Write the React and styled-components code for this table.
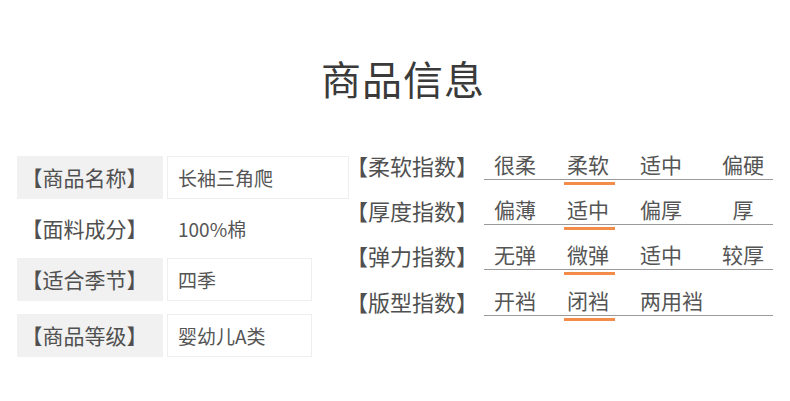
import React from 'react';
import styled, { createGlobalStyle } from 'styled-components';

const GlobalStyle = createGlobalStyle`
    body {
        margin: 0;
        background: #FFFFFF;
        font-family: "Noto Sans CJK SC", "Noto Sans", sans-serif;
    }
`;

const basics = [
    { label: '商品名称', value: '长袖三角爬', boxed: true, wide: true },
    { label: '面料成分', value: '100%棉', boxed: false },
    { label: '适合季节', value: '四季', boxed: true },
    { label: '商品等级', value: '婴幼儿A类', boxed: true },
];

const indexes = [
    { label: '柔软指数', options: ['很柔', '柔软', '适中', '偏硬'], selected: 1 },
    { label: '厚度指数', options: ['偏薄', '适中', '偏厚', '厚'], selected: 1 },
    { label: '弹力指数', options: ['无弹', '微弹', '适中', '较厚'], selected: 1 },
    { label: '版型指数', options: ['开裆', '闭裆', '两用裆'], selected: 1 },
];

export default function App() {
    return (
        <Page>
            <GlobalStyle />
            <Title>商品信息</Title>
            <Body>
                <BasicTable>
                    {
                        basics.map((row, index) => (
                            <BasicRow key={ index } last={ index === basics.length - 1 }>
                                <Label boxed={ row.boxed }>【{ row.label }】</Label>
                                <Value boxed={ row.boxed } wide={ row.wide }>{ row.value }</Value>
                            </BasicRow>
                        ))
                    }
                </BasicTable>
                <IndexTable>
                    {
                        indexes.map((row, index) => (
                            <IndexRow key={ index }>
                                <IndexLabel>【{ row.label }】</IndexLabel>
                                <Options>
                                    {
                                        row.options.map((option, i) => (
                                            <Option key={ i } last={ i === 3 }>
                                                <OptionText selected={ i === row.selected }>{ option }</OptionText>
                                            </Option>
                                        ))
                                    }
                                </Options>
                            </IndexRow>
                        ))
                    }
                </IndexTable>
            </Body>
        </Page>
    );
}

const Page = styled.div`
    width: 790px;
    height: 401px;
    overflow: hidden;
`;
const Title = styled.h1`
    margin: 0;
    padding: 56px 0 0 16px;
    height: 84px;
    text-align: center;
    font-size: 40px;
    line-height: 44px;
    font-weight: 400;
    color: #3A3A3A;
    letter-spacing: 1px;
`;
const Body = styled.div`
    display: flex;
    align-items: flex-start;
    padding-left: 17px;
`;
const BasicTable = styled.div`
    display: flex;
    flex-direction: column;
    gap: 8px;
    margin-top: 16px;
    width: 332px;
    flex-shrink: 0;
`;
const BasicRow = styled.div`
    display: flex;
    gap: 4px;
    height: 43px;
    margin-top: ${ props => props.last ? '5px' : '0' };
`;
/* half-width brackets, as in the reference */
const Label = styled.div`
    width: 146px;
    flex-shrink: 0;
    padding-left: 15px;
    box-sizing: border-box;
    font-size: 21px;
    line-height: 43px;
    font-feature-settings: "halt";
    color: #505050;
    white-space: nowrap;
    background: ${ props => props.boxed ? '#F1F1F1' : 'transparent' };
`;
const Value = styled.div`
    width: ${ props => props.wide ? '182px' : '145px' };
    flex-shrink: 0;
    display: flex;
    align-items: center;
    padding-left: 10px;
    box-sizing: border-box;
    font-size: 19px;
    color: #555555;
    border: 1px solid ${ props => props.boxed ? '#EEEEEE' : 'transparent' };
`;
const IndexTable = styled.div`
    display: flex;
    flex-direction: column;
    margin-top: -5px;
`;
const IndexRow = styled.div`
    display: flex;
    align-items: flex-end;
    height: 45px;
    &:last-child {
        height: 46px;
    }
`;
const IndexLabel = styled.div`
    width: 135px;
    padding-left: 8px;
    box-sizing: border-box;
    font-size: 22px;
    line-height: 24px;
    font-feature-settings: "halt";
    padding-bottom: 3px;
    color: #505050;
    white-space: nowrap;
`;
const Options = styled.div`
    display: flex;
    width: 289px;
    padding-left: 10px;
    box-sizing: border-box;
    border-bottom: 1px solid #9A9A9A;
`;
const Option = styled.div`
    width: ${ props => props.last ? 'auto' : '73px' };
    flex: ${ props => props.last ? '1' : 'none' };
    text-align: ${ props => props.last ? 'center' : 'left' };
    font-size: 21px;
    line-height: 24px;
    padding-bottom: 3px;
    color: #555555;
    white-space: nowrap;
`;
const OptionText = styled.span`
    position: relative;
    &::after {
        content: '';
        display: ${ props => props.selected ? 'block' : 'none' };
        position: absolute;
        left: -3px;
        right: -6px;
        bottom: -6px;
        height: 3px;
        background: #F28C48;
    }
`;
